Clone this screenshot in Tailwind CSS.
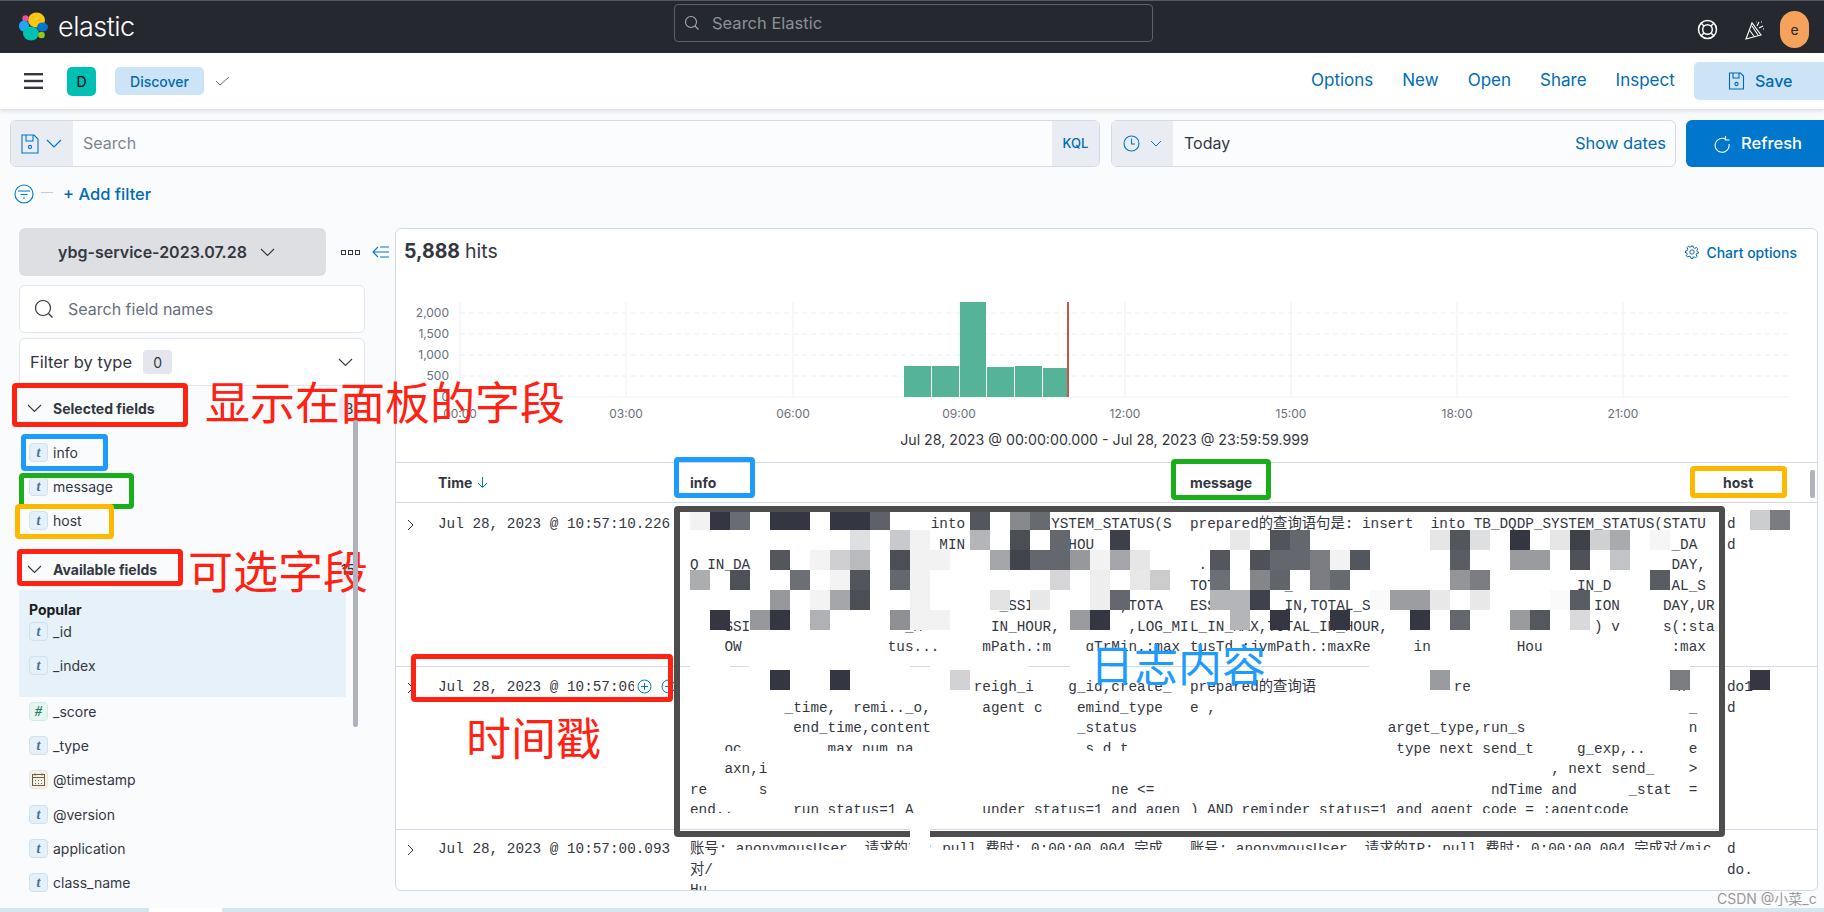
<!DOCTYPE html>
<html lang="zh">
<head>
  <meta charset="UTF-8" />
  <title>Discover - Elastic</title>
  <script src="https://cdn.jsdelivr.net/npm/@tailwindcss/browser@4"></script>
</head>
<body class="bg-[#fafbfd] font-['Inter','Noto_Sans_CJK_SC',sans-serif] text-[#343741]">
<div class="relative w-[1824px] h-[912px] overflow-hidden flex flex-col">

  <!-- top bar -->
  <header class="h-[53px] shrink-0 bg-[#25282f] border-t border-[#55585e] relative flex items-center">
    <svg class="ml-[18px] mt-[-1px]" width="32" height="32" viewBox="18 8 32 32">
      <ellipse cx="36.5" cy="17" rx="8.5" ry="7.5" fill="#fec514"/>
      <circle cx="25.5" cy="15.5" r="3.2" fill="#f04e98"/>
      <ellipse cx="24" cy="23" rx="5" ry="5.5" fill="#1ba9f5"/>
      <ellipse cx="42.5" cy="24" rx="5.5" ry="4.5" fill="#0077cc"/>
      <ellipse cx="31" cy="30.5" rx="8" ry="7" fill="#00bfb3"/>
      <circle cx="41.5" cy="32" r="3.3" fill="#93c90e"/>
    </svg>
    <span class="ml-[8px] text-[27px] font-light text-white tracking-[-0.5px]">elastic</span>
    <div class="absolute left-[674px] top-[3px] w-[479px] h-[38px] border border-[#5d6066] rounded-[4px] flex items-center pl-[9px] text-[16.5px] text-[#8d9096]">
      <svg width="16" height="16" viewBox="0 0 16 16" fill="none" stroke="#a8abb0" stroke-width="1.1"><circle cx="7" cy="7" r="5.5"/><path d="M11 11l3.5 3.5"/></svg>
      <span class="ml-[12px]">Search Elastic</span>
    </div>
    <div class="absolute left-[1697px] top-[10px] flex items-center">
      <svg width="21" height="21" viewBox="0 0 21 21" fill="none" stroke="#fff" stroke-width="1.5"><circle cx="10.5" cy="10.5" r="9"/><circle cx="10.5" cy="10.5" r="4.8"/><path d="M4 4l3.2 3.2M17 4l-3.2 3.2M4 17l3.2-3.2M17 17l-3.2-3.2"/></svg>
      <svg class="ml-[26px]" width="22" height="22" viewBox="0 0 22 22" fill="none" stroke="#fff" stroke-width="1.1"><path d="M2 20L8 4l9 12z"/><path d="M5.5 11l5 7M8 7l6 9"/><path d="M13 7l2-4M15 9l4-2M17 3h1M19 10h1M12 3h.5"/></svg>
      <div class="ml-[14px] w-[29px] h-[37px] rounded-full bg-[#f5a35c] flex items-center justify-center text-[14px] text-[#26262b]">e</div>
    </div>
  </header>

  <!-- app bar -->
  <div class="h-[56px] shrink-0 bg-white shadow-[0_2px_4px_rgba(152,162,179,0.35)] relative z-10 flex items-center">
    <svg class="ml-[24px]" width="19" height="16" viewBox="0 0 19 16" fill="#343741"><rect width="19" height="2.4"/><rect y="6.8" width="19" height="2.4"/><rect y="13.6" width="19" height="2.4"/></svg>
    <div class="ml-[24px] w-[29px] h-[29px] rounded-[5px] bg-[#00bfb3] flex items-center justify-center text-[14px] text-black">D</div>
    <div class="ml-[19px] w-[89px] h-[28px] rounded-[5px] bg-[#cce4f5] flex items-center justify-center text-[14px] font-medium text-[#006bb4]">Discover</div>
    <svg class="ml-[11px]" width="16" height="10" viewBox="0 0 16 10" fill="none" stroke="#69707d"><path d="M1 5l4 4 9-8"/></svg>
    <div class="absolute left-[1311px] top-0 h-full flex items-center gap-[29px] text-[17px] text-[#006bb4]">
      <span>Options</span><span>New</span><span>Open</span><span>Share</span><span>Inspect</span>
    </div>
    <div class="absolute left-[1694px] top-[9px] w-[130px] h-[38px] bg-[#cce4f5] rounded-tl-[5px] rounded-bl-[5px] flex items-center pl-[34px] text-[16px] font-medium text-[#006bb4]">
      <svg width="17" height="18" viewBox="0 0 17 18" fill="none" stroke="#006bb4" stroke-width="1.1"><path d="M1.5 1h11l3 3v13h-14z"/><path d="M5 1v5h6V1"/><circle cx="8.5" cy="12" r="1.6"/></svg>
      <span class="ml-[10px]">Save</span>
    </div>
  </div>

  <!-- query row -->
  <div class="mt-[11px] h-[47px] shrink-0 flex pl-[10px] pr-0">
    <div class="w-[1090px] border border-[#d3dae6] rounded-[6px] flex overflow-hidden bg-[#fbfcfd]">
      <div class="w-[62px] bg-[#e9edf3] flex items-center pl-[10px]">
        <svg width="18" height="20" viewBox="0 0 18 20" fill="none" stroke="#0077cc" stroke-width="1.1"><path d="M1 1h12l4 4v14H1z"/><path d="M5 1v6h7V1"/><circle cx="9" cy="13" r="1.6"/></svg>
        <svg class="ml-[7px]" width="16" height="10" viewBox="0 0 16 10" fill="none" stroke="#0077cc" stroke-width="1.2"><path d="M1 1l7 7 7-7"/></svg>
      </div>
      <div class="flex-1 flex items-center pl-[10px] pb-[1px] text-[16px] text-[#7e8590]">Search</div>
      <div class="w-[47px] bg-[#e9edf3] flex items-center justify-center text-[13px] font-medium text-[#006bb4]">KQL</div>
    </div>
    <div class="ml-[11px] w-[565px] border border-[#d3dae6] rounded-[6px] flex overflow-hidden bg-[#fbfcfd]">
      <div class="w-[61px] bg-[#e9edf3] flex items-center pl-[11px]">
        <svg width="17" height="17" viewBox="0 0 17 17" fill="none" stroke="#0077cc" stroke-width="1.1"><circle cx="8.5" cy="8.5" r="7.5"/><path d="M8.5 3.5v5.5h3.5"/></svg>
        <svg class="ml-[10px]" width="12" height="8" viewBox="0 0 12 8" fill="none" stroke="#0077cc"><path d="M1 1l5 5 5-5"/></svg>
      </div>
      <div class="flex-1 flex items-center pl-[11px] pb-[1px] text-[16px] text-[#343741]">Today</div>
      <div class="flex items-center pr-[9px] pb-[1px] text-[16.5px] text-[#006bb4]">Show dates</div>
    </div>
    <div class="ml-[10px] flex-1 bg-[#0077cc] rounded-tl-[6px] rounded-bl-[6px] flex items-center pl-[28px] text-[16.5px] font-medium text-white">
      <svg width="16" height="18" viewBox="0 0 16 18" fill="none" stroke="#fff" stroke-width="1.1"><path d="M12 4.5A7 7 0 1 0 15 9"/><path d="M11.5 1v4h4"/></svg>
      <span class="ml-[11px]">Refresh</span>
    </div>
  </div>

  <!-- filter row -->
  <div class="mt-[15px] h-[24px] shrink-0 flex items-center pl-[14px]">
    <svg width="20" height="20" viewBox="0 0 20 20" fill="none" stroke="#0077cc" stroke-width="1.1"><circle cx="10" cy="10" r="9"/><path d="M4 7h12M6.5 10.5h7M9 14h2"/></svg>
    <div class="ml-[7px] w-[12px] h-[1px] bg-[#c5cbd6] mt-[-4px]"></div>
    <span class="ml-[10px] text-[16.5px] font-medium text-[#006bb4]">+ Add filter</span>
  </div>

  <!-- body -->
  <div class="mt-[22px] flex-1 min-h-0 flex pl-[19px]">

    <!-- sidebar -->
    <aside class="w-[376px] shrink-0">
      <div class="flex items-center">
        <div class="w-[307px] h-[48px] bg-[#dddfe3] rounded-[6px] flex items-center pl-[39px] text-[16px] font-semibold text-[#343741]">
          ybg-service-2023.07.28
          <svg class="ml-[13px]" width="15" height="9" viewBox="0 0 15 9" fill="none" stroke="#343741" stroke-width="1.1"><path d="M1 1l6.5 6.5L14 1"/></svg>
        </div>
        <svg class="ml-[15px]" width="20" height="5" viewBox="0 0 20 5" fill="none" stroke="#343741"><rect x=".5" y=".5" width="4" height="4"/><rect x="7.5" y=".5" width="4" height="4"/><rect x="14.5" y=".5" width="4" height="4"/></svg>
        <svg class="ml-[11px]" width="18" height="12" viewBox="0 0 18 12" fill="none" stroke="#0077cc" stroke-width="1.1"><path d="M6 1L1 6l5 5M1 6h16M8 1h9M8 11h9"/></svg>
      </div>
      <div class="mt-[9px] w-[346px] h-[48px] bg-white border border-[#e1e6ef] rounded-[6px] flex items-center pl-[14px] text-[16px] text-[#69707d]">
        <svg width="20" height="20" viewBox="0 0 20 20" fill="none" stroke="#343741" stroke-width="1.2"><circle cx="9" cy="9" r="7.5"/><path d="M14.5 14.5l4 4"/></svg>
        <span class="ml-[14px]">Search field names</span>
      </div>
      <div class="mt-[5px] w-[346px] h-[48px] bg-white border border-[#e1e6ef] rounded-t-[6px] flex items-center pl-[10px] text-[16.5px] text-[#343741]">
        Filter by type
        <span class="ml-[11px] w-[29px] h-[24px] bg-[#e3e6ec] rounded-[4px] flex items-center justify-center text-[14px]">0</span>
        <svg class="ml-auto mr-[11px]" width="15" height="9" viewBox="0 0 15 9" fill="none" stroke="#343741" stroke-width="1.1"><path d="M1 1l6.5 6.5L14 1"/></svg>
      </div>

      <div class="h-[44px] flex items-center pl-[8px] text-[14px] font-bold text-[#343741]">
        <svg width="15" height="9" viewBox="0 0 15 9" fill="none" stroke="#343741" stroke-width="1.1"><path d="M1 1l6.5 6.5L14 1"/></svg>
        <span class="ml-[11px]">Selected fields</span>
        <span class="ml-auto mr-[36px] w-[20px] h-[24px] bg-[#e9edf3] rounded-[3px] flex items-center justify-center font-normal">3</span>
      </div>
      <div class="pt-[5px] text-[14px] text-[#343741]">
        <div class="h-[34px] flex items-center pl-[10px] gap-[5px]"><span class="w-[19px] h-[19px] rounded-[4px] bg-[#e6f0f8] border border-[#cfe0ee] flex items-center justify-center font-['Liberation_Serif',serif] italic font-bold text-[#41719a]">t</span>info</div>
        <div class="h-[34px] flex items-center pl-[10px] gap-[5px]"><span class="w-[19px] h-[19px] rounded-[4px] bg-[#e6f0f8] border border-[#cfe0ee] flex items-center justify-center font-['Liberation_Serif',serif] italic font-bold text-[#41719a]">t</span>message</div>
        <div class="h-[35px] flex items-center pl-[10px] gap-[5px]"><span class="w-[19px] h-[19px] rounded-[4px] bg-[#e6f0f8] border border-[#cfe0ee] flex items-center justify-center font-['Liberation_Serif',serif] italic font-bold text-[#41719a]">t</span>host</div>
      </div>
      <div class="mt-[10px] h-[42px] flex items-center pl-[8px] text-[14px] font-bold text-[#343741]">
        <svg width="15" height="9" viewBox="0 0 15 9" fill="none" stroke="#343741" stroke-width="1.1"><path d="M1 1l6.5 6.5L14 1"/></svg>
        <span class="ml-[11px]">Available fields</span>
        <span class="ml-auto mr-[36px] w-[22px] h-[26px] bg-[#e9edf3] rounded-[3px] flex items-center justify-center font-normal">15</span>
      </div>
      <div class="w-[327px] h-[107px] bg-[#e6f1fa] text-[14px] pt-[10px]">
        <div class="pl-[10px] h-[19px] flex items-center font-bold text-[#1a1c21]">Popular</div>
        <div class="h-[34px] flex items-center pl-[10px] gap-[5px] mt-[-5px]"><span class="w-[19px] h-[19px] rounded-[4px] bg-[#e6f0f8] border border-[#cfe0ee] flex items-center justify-center font-['Liberation_Serif',serif] italic font-bold text-[#41719a]">t</span>_id</div>
        <div class="h-[34px] flex items-center pl-[10px] gap-[5px]"><span class="w-[19px] h-[19px] rounded-[4px] bg-[#e6f0f8] border border-[#cfe0ee] flex items-center justify-center font-['Liberation_Serif',serif] italic font-bold text-[#41719a]">t</span>_index</div>
      </div>
      <div class="-mt-[3px] text-[14px]">
        <div class="h-[34px] flex items-center pl-[10px] gap-[5px]"><span class="w-[19px] h-[19px] rounded-[4px] bg-[#e6f5f0] border border-[#d2ebe2] flex items-center justify-center font-['Liberation_Serif',serif] italic font-bold text-[#2f7d63]">#</span>_score</div>
        <div class="h-[34px] flex items-center pl-[10px] gap-[5px]"><span class="w-[19px] h-[19px] rounded-[4px] bg-[#e6f0f8] border border-[#cfe0ee] flex items-center justify-center font-['Liberation_Serif',serif] italic font-bold text-[#41719a]">t</span>_type</div>
        <div class="h-[35px] flex items-center pl-[10px] gap-[5px]"><span class="w-[19px] h-[19px] rounded-[4px] bg-[#f5f1e8] border border-[#ebe5d8] flex items-center justify-center"><svg width="13" height="13" viewBox="0 0 13 13" fill="none" stroke="#6b6045"><rect x=".5" y="1.5" width="12" height="11"/><path d="M.5 4.5h12M3 .5v2M10 .5v2M3.5 7v1M6.5 7v1M9.5 7v1M3.5 10v1M6.5 10v1M9.5 10v1"/></svg></span>@timestamp</div>
        <div class="h-[34px] flex items-center pl-[10px] gap-[5px]"><span class="w-[19px] h-[19px] rounded-[4px] bg-[#e6f0f8] border border-[#cfe0ee] flex items-center justify-center font-['Liberation_Serif',serif] italic font-bold text-[#41719a]">t</span>@version</div>
        <div class="h-[34px] flex items-center pl-[10px] gap-[5px]"><span class="w-[19px] h-[19px] rounded-[4px] bg-[#e6f0f8] border border-[#cfe0ee] flex items-center justify-center font-['Liberation_Serif',serif] italic font-bold text-[#41719a]">t</span>application</div>
        <div class="h-[34px] flex items-center pl-[10px] gap-[5px]"><span class="w-[19px] h-[19px] rounded-[4px] bg-[#e6f0f8] border border-[#cfe0ee] flex items-center justify-center font-['Liberation_Serif',serif] italic font-bold text-[#41719a]">t</span>class_name</div>
      </div>
    </aside>

    <!-- main panel -->
    <main class="w-[1423px] h-[663px] bg-white border border-[#d3dae6] rounded-[6px] overflow-hidden flex flex-col">
      <div class="h-[46px] shrink-0 flex items-center pl-[8px] pr-[20px]">
        <span class="text-[19.5px] font-bold">5,888</span><span class="ml-[5px] text-[19.5px]">hits</span>
        <span class="ml-auto flex items-center text-[14px] font-medium text-[#006bb4]">
          <svg class="mr-[7px]" width="14" height="14" viewBox="0 0 14 14" fill="none" stroke="#006bb4"><circle cx="7" cy="7" r="2.2"/><path d="M6 1h2l.4 1.7 1.5.7 1.5-1 1.4 1.4-1 1.5.7 1.5L13.5 7l0 1-1.7.4-.7 1.5 1 1.5-1.4 1.4-1.5-1-1.5.7L8 13.5H6l-.4-1.7-1.5-.7-1.5 1-1.4-1.4 1-1.5-.7-1.5L.5 8V6l1.7-.4.7-1.5-1-1.5 1.4-1.4 1.5 1 1.5-.7z"/></svg>
          Chart options
        </span>
      </div>
      <svg class="shrink-0 block" width="1421" height="150" viewBox="396 275 1421 150" font-family="Inter" font-size="12" fill="#69707d">
        <g stroke="#eceef2" stroke-dasharray="5 4">
          <path d="M460 313H1790M460 334H1790M460 355H1790M460 376H1790"/>
        </g>
        <g stroke="#eef0f3">
          <path d="M460 397H1790M460 302V397M626 302V397M793 302V397M959 302V397M1125 302V397M1291 302V397M1457 302V397M1623 302V397"/>
        </g>
        <g fill="#54b399">
          <rect x="904" y="366" width="27" height="31"/>
          <rect x="932" y="366" width="27" height="31"/>
          <rect x="960" y="302" width="26" height="95"/>
          <rect x="987" y="367" width="27" height="30"/>
          <rect x="1015" y="366" width="27" height="31"/>
          <rect x="1043" y="368" width="26" height="29"/>
        </g>
        <rect x="1067" y="302" width="2" height="95" fill="#c8564c"/>
        <g text-anchor="end">
          <text x="449" y="317">2,000</text>
          <text x="449" y="338">1,500</text>
          <text x="449" y="359">1,000</text>
          <text x="449" y="380">500</text>
          <text x="449" y="401">0</text>
        </g>
        <g text-anchor="middle">
          <text x="460" y="418">00:00</text>
          <text x="626" y="418">03:00</text>
          <text x="793" y="418">06:00</text>
          <text x="959" y="418">09:00</text>
          <text x="1125" y="418">12:00</text>
          <text x="1291" y="418">15:00</text>
          <text x="1457" y="418">18:00</text>
          <text x="1623" y="418">21:00</text>
        </g>
      </svg>
      <div class="h-[37px] shrink-0 pb-[8px] pr-[4px] flex items-center justify-center text-[14.2px] text-[#343741]">Jul 28, 2023 @ 00:00:00.000 - Jul 28, 2023 @ 23:59:59.999</div>

      <div class="h-[41px] shrink-0 border-t border-b border-[#d3dae6] grid grid-cols-[294px_500px_537px_1fr] items-center text-[14px] font-bold">
        <span class="pl-[42px] flex items-center">Time<svg class="ml-[5px]" width="11" height="11" viewBox="0 0 11 11" fill="none" stroke="#0077cc"><path d="M5.5 0v10M1 6l4.5 4.5L10 6"/></svg></span>
        <span>info</span><span>message</span><span class="-ml-[4px]">host</span>
      </div>

      <!-- rows -->
      <div class="font-['Liberation_Mono','Noto_Sans_CJK_SC',monospace] text-[14.33px] leading-[20.5px] text-[#343741]">
        <div class="h-[164px] border-b border-[#d3dae6] grid grid-cols-[294px_500px_537px_1fr] pt-[11px] overflow-hidden">
          <div class="flex"><svg class="ml-[11px] mt-[5px]" width="8" height="12" viewBox="0 0 8 12" fill="none" stroke="#343741"><path d="M1 1l5 5-5 5"/></svg><span class="ml-[23px] whitespace-nowrap">Jul 28, 2023 @ 10:57:10.226</span></div>
<div class="whitespace-pre">                            into          YSTEM_STATUS(S
                            _MIN            HOU
Q_IN_DA

                                    _SSI          ,TOTA
    SSI                  _M        IN_HOUR,        ,LOG_MI
    OW                 tus...     mPath.:m    gTrMin.:max</div>
<div class="whitespace-pre">prepared的查询语句是: insert  into TB_DQDP_SYSTEM_STATUS(STATU
                                                        _DA
 . .                                                    DAY,
TOT        _                                 IN_D       AL_S
ESS        IN,TOTAL_S                          ION     DAY,UR
L_IN_MAX,TOTAL_IN_HOUR,                        ) v     s(:sta
tusTd,:jvmPath,:maxRe     in          Hou               :max</div>
<div class="whitespace-pre">d
d</div>
        </div>
        <div class="h-[163px] border-b border-[#d3dae6] grid grid-cols-[294px_500px_537px_1fr] pt-[10px] overflow-hidden">
          <div class="flex items-start"><svg class="ml-[11px] mt-[5px]" width="8" height="12" viewBox="0 0 8 12" fill="none" stroke="#343741"><path d="M1 1l5 5-5 5"/></svg><span class="ml-[23px] w-[196px] overflow-hidden whitespace-nowrap">Jul 28, 2023 @ 10:57:06.093</span>
            <svg class="ml-[3px] mt-[2px] shrink-0" width="15" height="15" viewBox="0 0 15 15" fill="none" stroke="#0077cc"><circle cx="7.5" cy="7.5" r="6.5"/><path d="M4 7.5h7M7.5 4v7"/></svg>
            <svg class="ml-[9px] mt-[2px] shrink-0" width="15" height="15" viewBox="0 0 15 15" fill="none" stroke="#0077cc"><circle cx="7.5" cy="7.5" r="6.5"/><path d="M4 7.5h7"/></svg></div>
<div class="whitespace-pre">                                 reigh_i    g_id,create_
           _time,  remi.._o,      agent c    emind_type
            end_time,content                 _status
    oc          max num pa                    s d t
    axn,i
re      s                                        ne &lt;=
end..       run status=1 A        under status=1 and agen</div>
<div class="whitespace-pre">prepared的查询语                re                        n
e ,                                                       _
                       arget_type,run_s                   n
                        type next send_t     g_exp,..     e
                                          , next send_    &gt;
                                   ndTime and      _stat  =
) AND reminder status=1 and agent code = :agentcode</div>
<div class="whitespace-pre">do1
d</div>
        </div>
        <div class="h-[60px] grid grid-cols-[294px_500px_537px_1fr] pt-[9px] overflow-hidden">
          <div class="flex"><svg class="ml-[11px] mt-[5px]" width="8" height="12" viewBox="0 0 8 12" fill="none" stroke="#343741"><path d="M1 1l5 5-5 5"/></svg><span class="ml-[23px] whitespace-nowrap">Jul 28, 2023 @ 10:57:00.093</span></div>
<div class="whitespace-pre">账号: anonymousUser, 请求的IP: pull 费时: 0:00:00.004 完成
对/
Hu</div>
<div class="whitespace-pre">账号: anonymousUser, 请求的IP: pull 费时: 0:00:00.004 完成对/mic</div>
<div class="whitespace-pre">d
do.</div>
        </div>
      </div>
    </main>
  </div>

  <!-- white cover and mosaic over the log text -->
  <div id="mosaic" class="absolute inset-0 pointer-events-none"></div>

  <!-- annotations -->
  <div class="absolute left-[12px] top-[383px] w-[176px] h-[44px] border-[5px] border-[#ff2213] rounded-[4px]"></div>
  <div class="absolute left-[21px] top-[434px] w-[87px] h-[37px] border-[5px] border-[#1e9bff] rounded-[4px]"></div>
  <div class="absolute left-[19px] top-[473px] w-[115px] h-[36px] border-[5px] border-[#1aaf1a] rounded-[4px]"></div>
  <div class="absolute left-[15px] top-[504px] w-[99px] h-[35px] border-[5px] border-[#ffb800] rounded-[4px]"></div>
  <div class="absolute left-[17px] top-[549px] w-[166px] h-[37px] border-[5px] border-[#ff2213] rounded-[4px]"></div>
  <div class="absolute left-[411px] top-[654px] w-[262px] h-[48px] border-[5px] border-[#ff2213] rounded-[4px]"></div>
  <div class="absolute left-[674px] top-[457px] w-[81px] h-[41px] border-[5px] border-[#1e9bff] rounded-[4px]"></div>
  <div class="absolute left-[1171px] top-[459px] w-[100px] h-[41px] border-[5px] border-[#1aaf1a] rounded-[4px]"></div>
  <div class="absolute left-[1690px] top-[466px] w-[97px] h-[32px] border-[5px] border-[#ffb800] rounded-[4px]"></div>
  <div class="absolute left-[674px] top-[506px] w-[1051px] h-[331px] border-[6px] border-[#4d4d4d] rounded-[4px]"></div>
  <div class="absolute left-[910px] top-[826px] w-[20px] h-[25px] bg-white"></div>
  <div class="absolute inset-0 pointer-events-none font-['Noto_Sans_CJK_SC',sans-serif] leading-none whitespace-nowrap">
    <span class="absolute left-[205px] top-[378px] text-[45px] text-[#ff2213]">显示在面板的字段</span>
    <span class="absolute left-[188px] top-[547px] text-[45px] text-[#ff2213]">可选字段</span>
    <span class="absolute left-[466px] top-[714px] text-[45px] text-[#ff2213]">时间戳</span>
    <span class="absolute left-[1090px] top-[641px] text-[44px] text-[#1e9bff]">日志内容</span>
  </div>

  <!-- scrollbars, footer strip, watermark -->
  <div class="absolute left-[353px] top-[420px] w-[5px] h-[307px] bg-[#b0b3bb] rounded-[2px]"></div>
  <div class="absolute left-[1810px] top-[470px] w-[5px] h-[28px] bg-[#b0b3bb] rounded-[2px]"></div>
  <div class="absolute left-0 bottom-0 w-full h-[4px] bg-[#d6e6ef] flex"><span class="ml-[149px] w-[73px] bg-white"></span></div>
  <div class="absolute left-[1717px] top-[888px] text-[14px] text-[#9a9a9a] whitespace-nowrap">CSDN @小菜_c</div>
</div>

<script>
  // white strips that clip the log text, x y w h
  const covers = [
    [680, 651, 1038, 13],
    [690, 664, 40, 4], [749, 664, 161, 4], [930, 664, 99, 4], [1070, 664, 40, 4], [1369, 664, 321, 4],
    [680, 751, 720, 6],
    [680, 813, 1038, 15],
    [716, 850, 1002, 39]
  ];
  // mosaic tiles: first x, then [rowY, [[column, colour], ...]]
  const tiles = [
    [690, [
      [510, [[0,'#f2f2f2'],[1,'#343641'],[2,'#6a6c73'],[4,'#343641'],[5,'#343641'],[7,'#343641'],[8,'#343641'],[9,'#5f6168'],[14,'#54565e'],[16,'#88898d'],[17,'#686a71']]],
      [530, [[8,'#dedfe1'],[10,'#c8c9cc'],[11,'#f2f2f2'],[14,'#b4b5b8'],[16,'#4c4e56'],[18,'#65676e'],[21,'#3e4049']]],
      [550, [[4,'#54565e'],[6,'#f3f3f3'],[7,'#cfcfd1'],[8,'#b9babd'],[10,'#4c4e56'],[11,'#f2f2f2'],[12,'#f2f2f2'],[15,'#a5a6a9'],[16,'#42444d'],[17,'#65676e'],[18,'#65676e'],[19,'#97989c'],[20,'#f2f2f2'],[21,'#a5a6a9'],[22,'#e6e6e7']]],
      [570, [[0,'#acadaf'],[2,'#4f5159'],[5,'#6d6f76'],[7,'#f3f3f3'],[8,'#53555d'],[10,'#65676e'],[11,'#f2f2f2'],[18,'#d6d6d8'],[20,'#eeeeee'],[22,'#e8e8e8'],[23,'#cccccc']]],
      [590, [[4,'#97989c'],[6,'#f3f3f3'],[7,'#a5a6a9'],[8,'#4c4e56'],[11,'#f2f2f2'],[15,'#e3e3e3'],[17,'#e8e8e9'],[20,'#eeeeee'],[21,'#65676e']]],
      [610, [[1,'#343641'],[3,'#97989c'],[4,'#343641'],[6,'#b0b1b4'],[10,'#8f9094'],[11,'#f2f2f2'],[12,'#f2f2f2'],[19,'#9a9b9f'],[20,'#343641']]],
      [670, [[4,'#343641'],[7,'#343641'],[13,'#d2d2d4']]]
    ]],
    [1210, [
      [530, [[1,'#e8e8e9'],[3,'#52545c'],[4,'#65676e'],[11,'#e6e6e7'],[12,'#54565e'],[13,'#dedfe1'],[15,'#343641'],[17,'#e6e6e7'],[18,'#3f4149'],[19,'#cfd0d2'],[20,'#a9aaad'],[22,'#f6f6f6']]],
      [550, [[0,'#54565e'],[2,'#4f5159'],[3,'#65676e'],[4,'#65676e'],[5,'#7b7d83'],[6,'#f2f2f2'],[7,'#54565e'],[12,'#5a5c63'],[15,'#9a9b9f'],[16,'#9a9b9f'],[18,'#4f5159'],[20,'#c2c3c6']]],
      [570, [[0,'#6d6f76'],[2,'#85868a'],[3,'#62646b'],[5,'#7b7d83'],[6,'#686a71'],[12,'#949599'],[13,'#7b7d83'],[22,'#5a5c63']]],
      [590, [[0,'#b4b5b8'],[1,'#b4b5b8'],[2,'#40424b'],[8,'#fafafa'],[9,'#9c9da0'],[10,'#9c9da0'],[11,'#e8e8e9'],[13,'#e8e8e9'],[17,'#fafafa'],[18,'#5a5c63']]],
      [610, [[1,'#b4b5b8'],[3,'#343641'],[6,'#343641'],[10,'#343641'],[12,'#65676e'],[15,'#9a9b9f'],[16,'#55575f'],[18,'#d9d9db']]],
      [670, [[11,'#9a9b9f'],[23,'#7c7d82']]]
    ]],
    [1750, [
      [510, [[0,'#cccdcf'],[1,'#7b7c82']]],
      [670, [[0,'#343641']]]
    ]]
  ];
  const box = document.getElementById("mosaic");
  function addRect(x, y, w, h, colour) {
    const el = document.createElement("div");
    el.className = "absolute";
    el.style.left = x + "px";
    el.style.top = y + "px";
    el.style.width = w + "px";
    el.style.height = h + "px";
    el.style.background = colour;
    box.appendChild(el);
  }
  covers.forEach(c => addRect(c[0], c[1], c[2], c[3], "#fff"));
  tiles.forEach(group => {
    group[1].forEach(row => {
      row[1].forEach(t => addRect(group[0] + t[0] * 20, row[0], 20, 20, t[1]));
    });
  });
</script>
</body>
</html>
